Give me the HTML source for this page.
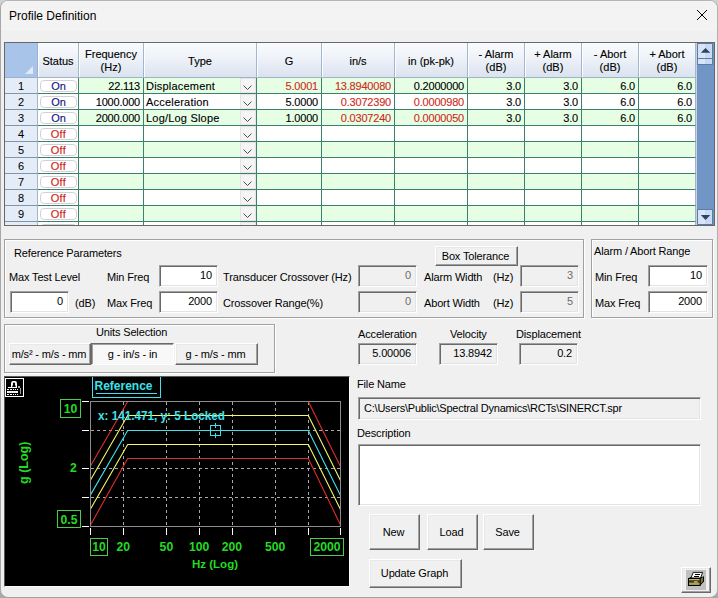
<!DOCTYPE html><html><head><meta charset="utf-8"><title>Profile Definition</title><style>
*{box-sizing:border-box;margin:0;padding:0}
html,body{width:718px;height:598px;overflow:hidden;background:linear-gradient(#d2d2d2,#d2d2d2 50%,#a8a8a8 50%,#a8a8a8);font-family:"Liberation Sans", sans-serif;}
#win{position:absolute;left:0;top:0;width:718px;height:598px;background:#f0f0f0;border:1px solid;border-color:#b4b4b4 #b0b0b0 #a2a2a2 #a8a8a8;border-radius:8px;overflow:hidden}
#tb{position:absolute;left:0;top:0;width:716px;height:30px;background:#f3f3f3}
.a{position:absolute;white-space:pre}
.t11{font-size:11px;line-height:13px;color:#000;letter-spacing:-0.15px}
.g11{font-size:11px;line-height:16px;color:#000}
/* classic controls */
.btn{position:absolute;background:#f0f0f0;border:1px solid;border-color:#fff #696969 #696969 #fff;box-shadow:inset -1px -1px 0 #a0a0a0, inset 1px 1px 0 #e8e8e8;font-size:11px;letter-spacing:-0.15px;text-align:center;color:#000;padding-right:2px}
.btnp{position:absolute;background:#f8f8f8;border:1px solid;border-color:#696969 #fff #fff #696969;box-shadow:inset 1px 1px 0 #a0a0a0;font-size:11px;letter-spacing:-0.15px;text-align:center;color:#000}
.ed{position:absolute;background:#fff;border:1px solid;border-color:#a0a0a0 #fff #fff #a0a0a0;box-shadow:inset 1px 1px 0 #696969, inset -1px -1px 0 #e3e3e3;font-size:11px;text-align:right;color:#000;padding-right:5px;letter-spacing:-0.15px}
.ed.dis{background:#f0f0f0;color:#6d6d6d}
.ed.ro{background:#f0f0f0}
.grp{position:absolute;border:1px solid #a0a0a0;box-shadow:1px 1px 0 #fff, inset 1px 1px 0 #fff}
/* grid */
#grid{-webkit-text-stroke:0.12px;position:absolute;left:4px;top:42px;width:711px;height:184px;border:1px solid #686868;background:#fff;overflow:hidden}
.hc{position:absolute;top:0;height:34px;background:linear-gradient(#f9fbfd 0%,#eef2f8 45%,#dbe3ef 100%);border-right:1px solid #a3b6cd;box-shadow:inset 1px 0 0 #fcfdfe;font-size:11px;line-height:13px;text-align:center;color:#000;display:flex;align-items:center;justify-content:center;padding-top:2px}
.rh{-webkit-text-stroke:0.05px;position:absolute;left:0;width:32px;height:16px;background:#e4ecf7;border-bottom:1px solid #8495aa;font-size:11px;line-height:16px;text-align:center;color:#000;padding-top:0px}
.c{position:absolute;height:16px;border-right:1px solid #3d806b;border-bottom:1px solid #3d806b;font-size:11px;line-height:16px;padding:0 3px 0 2px;white-space:pre;overflow:hidden}
.gr{background:#e6ffe4}
.r{text-align:right;letter-spacing:-0.2px}
.red{color:#cf2a20}
.pill{position:absolute;left:2px;top:2px;width:37px;height:12px;border:1px solid #d2d2d2;border-radius:4px;background:#fff;font-size:11px;line-height:10px;text-align:center}
.dd{position:absolute;right:0;top:0;width:16px;height:15px;background:#f4f4f4;border:1px solid #e4e4e4}
</style></head><body><div id="win">
<div id="tb"></div>
<div class="a" style="left:8px;top:7px;font-size:12px;line-height:16px;color:#000">Profile Definition</div>
<svg class="a" style="left:695px;top:8px" width="12" height="12" viewBox="0 0 12 12"><path d="M1 1 L11 11 M11 1 L1 11" stroke="#000" stroke-width="1" fill="none"/></svg>
<div id="grid" style="left:3px;top:41px">
<div class="a" style="left:0;top:0;width:33px;height:35px;background:#a9c4e9;border-right:1px solid #9bb1cf;border-bottom:1px solid #9bb1cf"><svg class="a" style="left:19px;top:22px" width="10" height="10" viewBox="0 0 10 10"><path d="M9 1 L9 9 L1 9 Z" fill="#dfe9f7"/></svg></div>
<div class="hc" style="left:33px;width:41px"><div>Status</div></div>
<div class="hc" style="left:74px;width:65px"><div>Frequency<br>(Hz)</div></div>
<div class="hc" style="left:139px;width:113px"><div>Type</div></div>
<div class="hc" style="left:252px;width:65px"><div>G</div></div>
<div class="hc" style="left:317px;width:73px"><div>in/s</div></div>
<div class="hc" style="left:390px;width:73px"><div>in (pk-pk)</div></div>
<div class="hc" style="left:463px;width:57px"><div>- Alarm<br>(dB)</div></div>
<div class="hc" style="left:520px;width:57px"><div>+ Alarm<br>(dB)</div></div>
<div class="hc" style="left:577px;width:57px"><div>- Abort<br>(dB)</div></div>
<div class="hc" style="left:634px;width:57px"><div>+ Abort<br>(dB)</div></div>
<div class="a" style="left:33px;top:34px;width:658px;height:1px;background:#9fb3c9"></div>
<div class="rh" style="top:35px;border-right:1px solid #a3b6cd;width:33px">1</div>
<div class="c" style="left:33px;top:35px;width:41px;padding:0"><div class="pill" style="color:#11117c">On</div></div>
<div class="c gr r" style="left:74px;top:35px;width:65px">22.113</div>
<div class="c gr" style="left:139px;top:35px;width:113px;letter-spacing:0.2px">Displacement<div class="dd"><svg class="a" style="left:1px;top:5px" width="11" height="8" viewBox="0 0 11 8"><path d="M1.5 1.5 L5.5 5.5 L9.5 1.5" stroke="#4a4a4a" stroke-width="1" fill="none"/></svg></div></div>
<div class="c gr red r" style="left:252px;top:35px;width:65px">5.0001</div>
<div class="c gr red r" style="left:317px;top:35px;width:73px">13.8940080</div>
<div class="c gr r" style="left:390px;top:35px;width:73px">0.2000000</div>
<div class="c gr r" style="left:463px;top:35px;width:57px">3.0</div>
<div class="c gr r" style="left:520px;top:35px;width:57px">3.0</div>
<div class="c gr r" style="left:577px;top:35px;width:57px">6.0</div>
<div class="c gr r" style="left:634px;top:35px;width:57px;border-right-color:#a9b3bf">6.0</div>
<div class="rh" style="top:51px;border-right:1px solid #a3b6cd;width:33px">2</div>
<div class="c" style="left:33px;top:51px;width:41px;padding:0"><div class="pill" style="color:#11117c">On</div></div>
<div class="c r" style="left:74px;top:51px;width:65px">1000.000</div>
<div class="c" style="left:139px;top:51px;width:113px;letter-spacing:0.2px">Acceleration<div class="dd"><svg class="a" style="left:1px;top:5px" width="11" height="8" viewBox="0 0 11 8"><path d="M1.5 1.5 L5.5 5.5 L9.5 1.5" stroke="#4a4a4a" stroke-width="1" fill="none"/></svg></div></div>
<div class="c r" style="left:252px;top:51px;width:65px">5.0000</div>
<div class="c red r" style="left:317px;top:51px;width:73px">0.3072390</div>
<div class="c red r" style="left:390px;top:51px;width:73px">0.0000980</div>
<div class="c r" style="left:463px;top:51px;width:57px">3.0</div>
<div class="c r" style="left:520px;top:51px;width:57px">3.0</div>
<div class="c r" style="left:577px;top:51px;width:57px">6.0</div>
<div class="c r" style="left:634px;top:51px;width:57px;border-right-color:#a9b3bf">6.0</div>
<div class="rh" style="top:67px;border-right:1px solid #a3b6cd;width:33px">3</div>
<div class="c" style="left:33px;top:67px;width:41px;padding:0"><div class="pill" style="color:#11117c">On</div></div>
<div class="c gr r" style="left:74px;top:67px;width:65px">2000.000</div>
<div class="c gr" style="left:139px;top:67px;width:113px;letter-spacing:0.2px">Log/Log Slope<div class="dd"><svg class="a" style="left:1px;top:5px" width="11" height="8" viewBox="0 0 11 8"><path d="M1.5 1.5 L5.5 5.5 L9.5 1.5" stroke="#4a4a4a" stroke-width="1" fill="none"/></svg></div></div>
<div class="c gr r" style="left:252px;top:67px;width:65px">1.0000</div>
<div class="c gr red r" style="left:317px;top:67px;width:73px">0.0307240</div>
<div class="c gr red r" style="left:390px;top:67px;width:73px">0.0000050</div>
<div class="c gr r" style="left:463px;top:67px;width:57px">3.0</div>
<div class="c gr r" style="left:520px;top:67px;width:57px">3.0</div>
<div class="c gr r" style="left:577px;top:67px;width:57px">6.0</div>
<div class="c gr r" style="left:634px;top:67px;width:57px;border-right-color:#a9b3bf">6.0</div>
<div class="rh" style="top:83px;border-right:1px solid #a3b6cd;width:33px">4</div>
<div class="c" style="left:33px;top:83px;width:41px;padding:0"><div class="pill" style="color:#d21a1a;letter-spacing:0.4px">Off</div></div>
<div class="c r" style="left:74px;top:83px;width:65px"></div>
<div class="c" style="left:139px;top:83px;width:113px;letter-spacing:0.2px"><div class="dd"><svg class="a" style="left:1px;top:5px" width="11" height="8" viewBox="0 0 11 8"><path d="M1.5 1.5 L5.5 5.5 L9.5 1.5" stroke="#4a4a4a" stroke-width="1" fill="none"/></svg></div></div>
<div class="c r" style="left:252px;top:83px;width:65px"></div>
<div class="c r" style="left:317px;top:83px;width:73px"></div>
<div class="c r" style="left:390px;top:83px;width:73px"></div>
<div class="c r" style="left:463px;top:83px;width:57px"></div>
<div class="c r" style="left:520px;top:83px;width:57px"></div>
<div class="c r" style="left:577px;top:83px;width:57px"></div>
<div class="c r" style="left:634px;top:83px;width:57px;border-right-color:#a9b3bf"></div>
<div class="rh" style="top:99px;border-right:1px solid #a3b6cd;width:33px">5</div>
<div class="c" style="left:33px;top:99px;width:41px;padding:0"><div class="pill" style="color:#d21a1a;letter-spacing:0.4px">Off</div></div>
<div class="c gr r" style="left:74px;top:99px;width:65px"></div>
<div class="c gr" style="left:139px;top:99px;width:113px;letter-spacing:0.2px"><div class="dd"><svg class="a" style="left:1px;top:5px" width="11" height="8" viewBox="0 0 11 8"><path d="M1.5 1.5 L5.5 5.5 L9.5 1.5" stroke="#4a4a4a" stroke-width="1" fill="none"/></svg></div></div>
<div class="c gr r" style="left:252px;top:99px;width:65px"></div>
<div class="c gr r" style="left:317px;top:99px;width:73px"></div>
<div class="c gr r" style="left:390px;top:99px;width:73px"></div>
<div class="c gr r" style="left:463px;top:99px;width:57px"></div>
<div class="c gr r" style="left:520px;top:99px;width:57px"></div>
<div class="c gr r" style="left:577px;top:99px;width:57px"></div>
<div class="c gr r" style="left:634px;top:99px;width:57px;border-right-color:#a9b3bf"></div>
<div class="rh" style="top:115px;border-right:1px solid #a3b6cd;width:33px">6</div>
<div class="c" style="left:33px;top:115px;width:41px;padding:0"><div class="pill" style="color:#d21a1a;letter-spacing:0.4px">Off</div></div>
<div class="c r" style="left:74px;top:115px;width:65px"></div>
<div class="c" style="left:139px;top:115px;width:113px;letter-spacing:0.2px"><div class="dd"><svg class="a" style="left:1px;top:5px" width="11" height="8" viewBox="0 0 11 8"><path d="M1.5 1.5 L5.5 5.5 L9.5 1.5" stroke="#4a4a4a" stroke-width="1" fill="none"/></svg></div></div>
<div class="c r" style="left:252px;top:115px;width:65px"></div>
<div class="c r" style="left:317px;top:115px;width:73px"></div>
<div class="c r" style="left:390px;top:115px;width:73px"></div>
<div class="c r" style="left:463px;top:115px;width:57px"></div>
<div class="c r" style="left:520px;top:115px;width:57px"></div>
<div class="c r" style="left:577px;top:115px;width:57px"></div>
<div class="c r" style="left:634px;top:115px;width:57px;border-right-color:#a9b3bf"></div>
<div class="rh" style="top:131px;border-right:1px solid #a3b6cd;width:33px">7</div>
<div class="c" style="left:33px;top:131px;width:41px;padding:0"><div class="pill" style="color:#d21a1a;letter-spacing:0.4px">Off</div></div>
<div class="c gr r" style="left:74px;top:131px;width:65px"></div>
<div class="c gr" style="left:139px;top:131px;width:113px;letter-spacing:0.2px"><div class="dd"><svg class="a" style="left:1px;top:5px" width="11" height="8" viewBox="0 0 11 8"><path d="M1.5 1.5 L5.5 5.5 L9.5 1.5" stroke="#4a4a4a" stroke-width="1" fill="none"/></svg></div></div>
<div class="c gr r" style="left:252px;top:131px;width:65px"></div>
<div class="c gr r" style="left:317px;top:131px;width:73px"></div>
<div class="c gr r" style="left:390px;top:131px;width:73px"></div>
<div class="c gr r" style="left:463px;top:131px;width:57px"></div>
<div class="c gr r" style="left:520px;top:131px;width:57px"></div>
<div class="c gr r" style="left:577px;top:131px;width:57px"></div>
<div class="c gr r" style="left:634px;top:131px;width:57px;border-right-color:#a9b3bf"></div>
<div class="rh" style="top:147px;border-right:1px solid #a3b6cd;width:33px">8</div>
<div class="c" style="left:33px;top:147px;width:41px;padding:0"><div class="pill" style="color:#d21a1a;letter-spacing:0.4px">Off</div></div>
<div class="c r" style="left:74px;top:147px;width:65px"></div>
<div class="c" style="left:139px;top:147px;width:113px;letter-spacing:0.2px"><div class="dd"><svg class="a" style="left:1px;top:5px" width="11" height="8" viewBox="0 0 11 8"><path d="M1.5 1.5 L5.5 5.5 L9.5 1.5" stroke="#4a4a4a" stroke-width="1" fill="none"/></svg></div></div>
<div class="c r" style="left:252px;top:147px;width:65px"></div>
<div class="c r" style="left:317px;top:147px;width:73px"></div>
<div class="c r" style="left:390px;top:147px;width:73px"></div>
<div class="c r" style="left:463px;top:147px;width:57px"></div>
<div class="c r" style="left:520px;top:147px;width:57px"></div>
<div class="c r" style="left:577px;top:147px;width:57px"></div>
<div class="c r" style="left:634px;top:147px;width:57px;border-right-color:#a9b3bf"></div>
<div class="rh" style="top:163px;border-right:1px solid #a3b6cd;width:33px">9</div>
<div class="c" style="left:33px;top:163px;width:41px;padding:0"><div class="pill" style="color:#d21a1a;letter-spacing:0.4px">Off</div></div>
<div class="c gr r" style="left:74px;top:163px;width:65px"></div>
<div class="c gr" style="left:139px;top:163px;width:113px;letter-spacing:0.2px"><div class="dd"><svg class="a" style="left:1px;top:5px" width="11" height="8" viewBox="0 0 11 8"><path d="M1.5 1.5 L5.5 5.5 L9.5 1.5" stroke="#4a4a4a" stroke-width="1" fill="none"/></svg></div></div>
<div class="c gr r" style="left:252px;top:163px;width:65px"></div>
<div class="c gr r" style="left:317px;top:163px;width:73px"></div>
<div class="c gr r" style="left:390px;top:163px;width:73px"></div>
<div class="c gr r" style="left:463px;top:163px;width:57px"></div>
<div class="c gr r" style="left:520px;top:163px;width:57px"></div>
<div class="c gr r" style="left:577px;top:163px;width:57px"></div>
<div class="c gr r" style="left:634px;top:163px;width:57px;border-right-color:#a9b3bf"></div>
<div class="rh" style="top:179px;border-right:1px solid #a3b6cd;width:33px">10</div>
<div class="c" style="left:33px;top:179px;width:41px;padding:0"><div class="pill" style="color:#d21a1a;letter-spacing:0.4px">Off</div></div>
<div class="c r" style="left:74px;top:179px;width:65px"></div>
<div class="c" style="left:139px;top:179px;width:113px;letter-spacing:0.2px"><div class="dd"><svg class="a" style="left:1px;top:5px" width="11" height="8" viewBox="0 0 11 8"><path d="M1.5 1.5 L5.5 5.5 L9.5 1.5" stroke="#4a4a4a" stroke-width="1" fill="none"/></svg></div></div>
<div class="c r" style="left:252px;top:179px;width:65px"></div>
<div class="c r" style="left:317px;top:179px;width:73px"></div>
<div class="c r" style="left:390px;top:179px;width:73px"></div>
<div class="c r" style="left:463px;top:179px;width:57px"></div>
<div class="c r" style="left:520px;top:179px;width:57px"></div>
<div class="c r" style="left:577px;top:179px;width:57px"></div>
<div class="c r" style="left:634px;top:179px;width:57px;border-right-color:#a9b3bf"></div>
<div class="a" style="left:691px;top:0;width:1px;height:182px;background:#c9d3df"></div>
<div class="a" style="left:692px;top:0;width:18px;height:182px;background:#7196c6"></div>
<div class="a" style="left:692px;top:0px;width:16px;height:16px;background:linear-gradient(90deg,#d3e1f6 0%,#dce8f9 50%,#c6d8f1 51%,#ccdcf3 100%);border:1px solid #5c7ba7"><svg class="a" style="left:1px;top:3px" width="12" height="7" viewBox="0 0 12 7"><path d="M6.5 0.9 L11.3 5.8 L1.8 5.8 Z" fill="#2e4465"/></svg></div>
<div class="a" style="left:692px;top:15px;width:16px;height:7px;background:linear-gradient(90deg,#d3e1f6 0%,#dce8f9 50%,#c6d8f1 51%,#ccdcf3 100%);border:1px solid #5c7ba7"></div>
<div class="a" style="left:692px;top:166px;width:16px;height:16px;background:linear-gradient(90deg,#d3e1f6 0%,#dce8f9 50%,#c6d8f1 51%,#ccdcf3 100%);border:1px solid #5c7ba7"><svg class="a" style="left:1px;top:5px" width="12" height="7" viewBox="0 0 12 7"><path d="M1.8 0.1 L11.3 0.1 L6.5 4.9 Z" fill="#2e4465"/></svg></div>
</div>
<div class="grp" style="left:3px;top:238px;width:580px;height:79px"></div>
<div class="a t11" style="left:13px;top:246px;">Reference Parameters</div>
<div class="a t11" style="left:8px;top:270px;">Max Test Level</div>
<div class="a t11" style="left:106px;top:270px;">Min Freq</div>
<div class="a t11" style="left:106px;top:296px;">Max Freq</div>
<div class="a t11" style="left:74px;top:296px;">(dB)</div>
<div class="a t11" style="left:222px;top:270px;">Transducer Crossover (Hz)</div>
<div class="a t11" style="left:222px;top:296px;">Crossover Range(%)</div>
<div class="a t11" style="left:423px;top:270px;">Alarm Width</div>
<div class="a t11" style="left:423px;top:296px;">Abort Width</div>
<div class="a t11" style="left:492px;top:270px;">(Hz)</div>
<div class="a t11" style="left:492px;top:296px;">(Hz)</div>
<div class="ed " style="left:9px;top:290px;width:59px;height:22px;line-height:19px">0</div>
<div class="ed " style="left:158px;top:264px;width:59px;height:22px;line-height:19px">10</div>
<div class="ed " style="left:158px;top:290px;width:59px;height:22px;line-height:19px">2000</div>
<div class="ed dis" style="left:357px;top:264px;width:59px;height:22px;line-height:19px">0</div>
<div class="ed dis" style="left:357px;top:290px;width:59px;height:22px;line-height:19px">0</div>
<div class="ed dis" style="left:519px;top:264px;width:59px;height:22px;line-height:19px">3</div>
<div class="ed dis" style="left:519px;top:290px;width:59px;height:22px;line-height:19px">5</div>
<div class="btn" style="left:434px;top:245px;width:83px;height:20px;line-height:18px">Box Tolerance</div>
<div class="grp" style="left:590px;top:238px;width:122px;height:79px"></div>
<div class="a t11" style="left:593px;top:244px;">Alarm / Abort Range</div>
<div class="a t11" style="left:594px;top:270px;">Min Freq</div>
<div class="a t11" style="left:594px;top:296px;">Max Freq</div>
<div class="ed " style="left:647px;top:264px;width:60px;height:22px;line-height:19px">10</div>
<div class="ed " style="left:647px;top:290px;width:60px;height:22px;line-height:19px">2000</div>
<div class="grp" style="left:3px;top:323px;width:271px;height:49px"></div>
<div class="a t11" style="left:95px;top:325px;">Units Selection</div>
<div class="btn" style="left:8px;top:342px;width:82px;height:22px;line-height:20px">m/s² - m/s - mm</div>
<div class="btnp" style="left:90px;top:342px;width:83px;height:22px;line-height:20px">g - in/s - in</div>
<div class="btn" style="left:174px;top:342px;width:83px;height:22px;line-height:20px">g - m/s - mm</div>
<div class="a t11" style="left:357px;top:327px;">Acceleration</div>
<div class="a t11" style="left:449px;top:327px;">Velocity</div>
<div class="a t11" style="left:515px;top:327px;">Displacement</div>
<div class="ed ro" style="left:357px;top:342px;width:59px;height:22px;line-height:19px">5.00006</div>
<div class="ed ro" style="left:438px;top:342px;width:59px;height:22px;line-height:19px">13.8942</div>
<div class="ed ro" style="left:518px;top:342px;width:59px;height:22px;line-height:19px">0.2</div>
<div class="a t11" style="left:356px;top:377px;">File Name</div>
<div class="ed ro" style="left:357px;top:396px;width:343px;height:23px;line-height:20px;text-align:left;padding-left:5px;letter-spacing:-0.22px">C:\Users\Public\Spectral Dynamics\RCTs\SINERCT.spr</div>
<div class="a t11" style="left:356px;top:426px;">Description</div>
<div class="ed" style="left:357px;top:443px;width:343px;height:62px"></div>
<div class="btn" style="left:368px;top:513px;width:51px;height:36px;line-height:34px">New</div>
<div class="btn" style="left:426px;top:513px;width:51px;height:36px;line-height:34px">Load</div>
<div class="btn" style="left:482px;top:513px;width:51px;height:36px;line-height:34px">Save</div>
<div class="btn" style="left:368px;top:558px;width:93px;height:29px;line-height:27px">Update Graph</div>
<div class="btn" style="left:680px;top:566px;width:30px;height:26px"><div class="a" style="left:4px;top:2px;width:20px;height:20px;background:#c0c0c0"></div><svg class="a" style="left:4px;top:2px" width="20" height="20" viewBox="0 0 20 20"><path d="M2.5 8.5 L4.5 7 L16 7 L18 6.2 L18 11.5 L14 15.8 L2.5 15.5 Z" fill="#000"/><path d="M14.5 9 L17 7 L17 11 L14.5 14.5 Z" fill="#77773a"/><rect x="2" y="8" width="12.5" height="8" fill="#000"/><rect x="3" y="9" width="10.5" height="6" fill="#86863f"/><rect x="3" y="9" width="10.5" height="1" fill="#b9b970"/><rect x="3" y="10.3" width="10.5" height="2.2" fill="#3c3c1c"/><rect x="3" y="13.4" width="10.5" height="1" fill="#b9b970"/><rect x="8.2" y="10.5" width="2.4" height="1" fill="#d01010"/><rect x="8" y="11.4" width="3.6" height="1" fill="#ffe890"/><path d="M7.2 2.4 L16.6 2.4 L14.6 8 L5 8 Z" fill="#fff" stroke="#000" stroke-width="0.9"/><path d="M8.8 4.5 H14 M8 6.5 H13.2" stroke="#000" stroke-width="1" shape-rendering="crispEdges"/></svg></div>
<div class="a" style="left:3px;top:375px;width:346px;height:211px;background:#000;border:1px solid;border-color:#5a5a5a #fbfbfb #fbfbfb #5a5a5a">
<svg class="a" style="left:0;top:0" width="344" height="209" viewBox="5 377 344 209" font-family='"Liberation Sans", sans-serif' font-weight="bold">
<defs><clipPath id="pc"><rect x="90.5" y="401.0" width="250.0" height="125.5"/></clipPath></defs>
<line x1="123.5" y1="401.5" x2="123.5" y2="526.5" stroke="#a8a8a8" stroke-width="1" stroke-dasharray="3 3" shape-rendering="crispEdges"/>
<line x1="166.5" y1="401.5" x2="166.5" y2="526.5" stroke="#a8a8a8" stroke-width="1" stroke-dasharray="3 3" shape-rendering="crispEdges"/>
<line x1="199.5" y1="401.5" x2="199.5" y2="526.5" stroke="#a8a8a8" stroke-width="1" stroke-dasharray="3 3" shape-rendering="crispEdges"/>
<line x1="232.5" y1="401.5" x2="232.5" y2="526.5" stroke="#a8a8a8" stroke-width="1" stroke-dasharray="3 3" shape-rendering="crispEdges"/>
<line x1="275.5" y1="401.5" x2="275.5" y2="526.5" stroke="#a8a8a8" stroke-width="1" stroke-dasharray="3 3" shape-rendering="crispEdges"/>
<line x1="308.5" y1="401.5" x2="308.5" y2="526.5" stroke="#a8a8a8" stroke-width="1" stroke-dasharray="3 3" shape-rendering="crispEdges"/>
<line x1="90.5" y1="430.5" x2="340.5" y2="430.5" stroke="#a8a8a8" stroke-width="1" stroke-dasharray="3 3" shape-rendering="crispEdges"/>
<line x1="90.5" y1="468.5" x2="340.5" y2="468.5" stroke="#a8a8a8" stroke-width="1" stroke-dasharray="3 3" shape-rendering="crispEdges"/>
<line x1="90.5" y1="497.5" x2="340.5" y2="497.5" stroke="#a8a8a8" stroke-width="1" stroke-dasharray="3 3" shape-rendering="crispEdges"/>
<line x1="82" y1="401.5" x2="89" y2="401.5" stroke="#fff" stroke-width="1" shape-rendering="crispEdges"/>
<line x1="82" y1="430.5" x2="89" y2="430.5" stroke="#fff" stroke-width="1" shape-rendering="crispEdges"/>
<line x1="82" y1="468.5" x2="89" y2="468.5" stroke="#fff" stroke-width="1" shape-rendering="crispEdges"/>
<line x1="82" y1="497.5" x2="89" y2="497.5" stroke="#fff" stroke-width="1" shape-rendering="crispEdges"/>
<line x1="82" y1="526.5" x2="89" y2="526.5" stroke="#fff" stroke-width="1" shape-rendering="crispEdges"/>
<line x1="90.5" y1="528" x2="90.5" y2="535" stroke="#fff" stroke-width="1" shape-rendering="crispEdges"/>
<line x1="123.5" y1="528" x2="123.5" y2="535" stroke="#fff" stroke-width="1" shape-rendering="crispEdges"/>
<line x1="166.5" y1="528" x2="166.5" y2="535" stroke="#fff" stroke-width="1" shape-rendering="crispEdges"/>
<line x1="199.5" y1="528" x2="199.5" y2="535" stroke="#fff" stroke-width="1" shape-rendering="crispEdges"/>
<line x1="232.5" y1="528" x2="232.5" y2="535" stroke="#fff" stroke-width="1" shape-rendering="crispEdges"/>
<line x1="275.5" y1="528" x2="275.5" y2="535" stroke="#fff" stroke-width="1" shape-rendering="crispEdges"/>
<line x1="308.5" y1="528" x2="308.5" y2="535" stroke="#fff" stroke-width="1" shape-rendering="crispEdges"/>
<line x1="340.5" y1="528" x2="340.5" y2="535" stroke="#fff" stroke-width="1" shape-rendering="crispEdges"/>
<polyline points="90.5,466.1 127.7,401.5 308.3,401.5 340.5,466.4" fill="none" stroke="#e02c2c" stroke-width="1.1" stroke-linejoin="round" clip-path="url(#pc)"/>
<polyline points="90.5,525.0 127.7,458.5 308.3,458.5 340.5,524.9" fill="none" stroke="#e02c2c" stroke-width="1.1" stroke-linejoin="round" clip-path="url(#pc)"/>
<polyline points="90.5,480.1 127.7,415.5 308.3,415.5 340.5,480.4" fill="none" stroke="#f6f666" stroke-width="1.1" stroke-linejoin="round" clip-path="url(#pc)"/>
<polyline points="90.5,509.1 127.7,444.5 308.3,444.5 340.5,509.6" fill="none" stroke="#f6f666" stroke-width="1.1" stroke-linejoin="round" clip-path="url(#pc)"/>
<polyline points="90.5,494.9 127.7,430.5 308.3,430.5 340.5,495.6" fill="none" stroke="#3fe0ea" stroke-width="1.1" stroke-linejoin="round" clip-path="url(#pc)"/>
<rect x="90.5" y="401.5" width="250.0" height="125.0" fill="none" stroke="#8c8c8c" stroke-width="1" shape-rendering="crispEdges"/>
<rect x="210.5" y="425.5" width="10" height="10" fill="none" stroke="#3fe0ea" stroke-width="1" shape-rendering="crispEdges"/>
<path d="M215.5 423 V428 M215.5 433 V438" stroke="#3fe0ea" stroke-width="1" shape-rendering="crispEdges"/>
<text x="98" y="420" font-size="12" fill="#3fe0ea" textLength="127" lengthAdjust="spacingAndGlyphs">x: 141.471, y: 5 Locked</text>
<path d="M92.5 377 V397.5 H160.5 V377" fill="none" stroke="#3fe0ea" stroke-width="1" shape-rendering="crispEdges"/>
<text x="94.5" y="390" font-size="12" fill="#3fe0ea">Reference</text>
<line x1="96" y1="393.5" x2="157" y2="393.5" stroke="#3fe0ea" stroke-width="1" shape-rendering="crispEdges"/>
<rect x="60.5" y="399.5" width="20" height="18" fill="none" stroke="#4ccc4c" shape-rendering="crispEdges"/>
<text x="70.5" y="413" font-size="12.2" fill="#22dc22" text-anchor="middle">10</text>
<text x="73.5" y="472" font-size="12.2" fill="#22dc22" text-anchor="middle">2</text>
<rect x="57.5" y="510.5" width="23" height="17" fill="none" stroke="#4ccc4c" shape-rendering="crispEdges"/>
<text x="69" y="523.5" font-size="12.2" fill="#22dc22" text-anchor="middle">0.5</text>
<rect x="90.5" y="538.5" width="17" height="17" fill="none" stroke="#4ccc4c" shape-rendering="crispEdges"/>
<text x="99" y="551" font-size="12.2" fill="#22dc22" text-anchor="middle">10</text>
<text x="123.2" y="551" font-size="12.2" fill="#22dc22" text-anchor="middle">20</text>
<text x="166.4" y="551" font-size="12.2" fill="#22dc22" text-anchor="middle">50</text>
<text x="199.2" y="551" font-size="12.2" fill="#22dc22" text-anchor="middle">100</text>
<text x="231.9" y="551" font-size="12.2" fill="#22dc22" text-anchor="middle">200</text>
<text x="275.1" y="551" font-size="12.2" fill="#22dc22" text-anchor="middle">500</text>
<rect x="310.5" y="538.5" width="33" height="17" fill="none" stroke="#4ccc4c" shape-rendering="crispEdges"/>
<text x="327" y="551" font-size="12.2" fill="#22dc22" text-anchor="middle">2000</text>
<text x="215" y="568" font-size="11.5" fill="#22dc22" text-anchor="middle">Hz (Log)</text>
<text transform="translate(27.6,462.8) rotate(-90)" font-size="12.5" fill="#22dc22" text-anchor="middle">g (Log)</text>
<rect x="5.5" y="378.5" width="18" height="18" fill="#000" stroke="#fff" shape-rendering="crispEdges"/>
<path d="M11 387.6 V383.4 Q11 381 13.2 381 H14.8 Q17 381 17 383.4 V387.6 Z" fill="#fff"/>
<circle cx="14" cy="383.7" r="1.15" fill="#000"/><path d="M13.2 384 H14.8 L15.9 387 H12.1 Z" fill="#000"/>
<rect x="8" y="387" width="9" height="1" fill="#fff"/>
<g shape-rendering="crispEdges">
<rect x="7" y="389" width="2" height="1" fill="#fff"/><rect x="7" y="394" width="2" height="1" fill="#fff"/>
<rect x="10" y="389" width="2" height="1" fill="#fff"/><rect x="10" y="394" width="2" height="1" fill="#fff"/>
<rect x="13" y="389" width="1" height="1" fill="#fff"/><rect x="13" y="394" width="1" height="1" fill="#fff"/>
<rect x="15" y="389" width="1" height="1" fill="#fff"/><rect x="15" y="394" width="1" height="1" fill="#fff"/>
<rect x="17" y="389" width="1" height="1" fill="#fff"/><rect x="17" y="394" width="1" height="1" fill="#fff"/>
<rect x="7" y="391" width="11" height="2" fill="#d8d8d8"/>
<rect x="7" y="391" width="1.6" height="2" fill="#fff" shape-rendering="auto"/>
<rect x="9.4" y="391" width="1.6" height="2" fill="#fff" shape-rendering="auto"/>
<rect x="11.6" y="391" width="1.6" height="2" fill="#fff" shape-rendering="auto"/>
<rect x="13.8" y="391" width="1.6" height="2" fill="#fff" shape-rendering="auto"/>
<rect x="16" y="391" width="1.6" height="2" fill="#fff" shape-rendering="auto"/>
<rect x="18" y="386" width="2" height="2" fill="#b0b0b0"/><rect x="20" y="388" width="1" height="6" fill="#a0a0a0"/>
</g>
</svg></div>
</div></body></html>
